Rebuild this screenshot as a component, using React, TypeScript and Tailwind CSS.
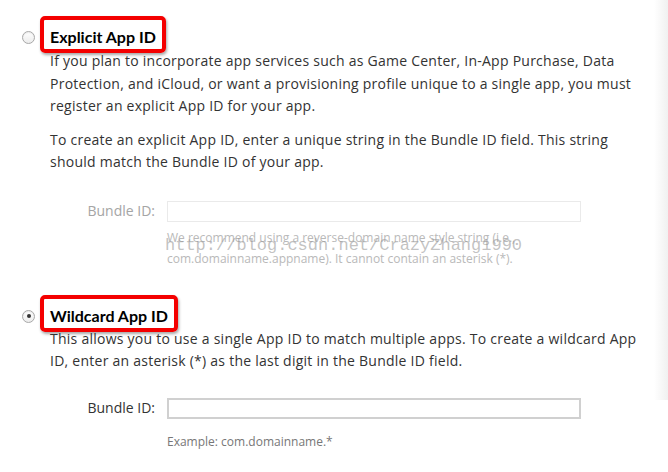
const body = "font-['Open_Sans','Lato',sans-serif]";

function Radio({ checked }: { checked?: boolean }) {
  return (
    <span className="mt-[15px] flex h-[13px] w-[13px] shrink-0 items-center justify-center rounded-full border border-[#a8a8a8] bg-gradient-to-b from-white to-[#ececec] shadow-[inset_0_1px_1px_rgba(0,0,0,0.08)]">
      {checked && <span className="h-[4px] w-[4px] rounded-full bg-[#333]" />}
    </span>
  );
}

function Heading({ children }: { children: React.ReactNode }) {
  return (
    <div className="inline-block rounded-[5px] border-[4px] border-[#f40000] pt-[6px] pr-[6px] pb-[1px] pl-[6px] shadow-[1px_2px_3px_rgba(0,0,0,0.35)]">
      <h2 className="font-['Lato',sans-serif] text-[16px] leading-[22px] font-bold text-black">
        {children}
      </h2>
    </div>
  );
}

function BundleRow({ disabled }: { disabled?: boolean }) {
  return (
    <div className="flex h-[21px] items-center">
      <label
        className={`w-[115px] text-right text-[14px] ${disabled ? "text-[#a5a5a5]" : "text-[#333]"}`}
      >
        Bundle ID:
      </label>
      <input
        disabled={disabled}
        className={`ml-[12px] h-[21px] w-[414px] bg-white outline-none ${
          disabled ? "border border-[#eaeaea]" : "border-2 border-[#d0d0d0]"
        }`}
      />
    </div>
  );
}

export default function App() {
  return (
    <div className={`relative h-[472px] w-[668px] overflow-hidden bg-white text-[#333] ${body}`}>
      <div className="pointer-events-none absolute top-0 right-0 h-[400px] w-[14px] bg-gradient-to-r from-white to-[#f0f0f0]" />

      <div className="flex gap-[5px] pt-[16px] pl-[22px]">
        <Radio />
        <div className="flex flex-col">
          <div className="-mb-[3px]">
            <Heading>Explicit App ID</Heading>
          </div>
          <div className="pl-[10px] text-[14px] leading-[22.5px] tracking-[0.25px]">
            <p className="w-[590px]">
              If you plan to incorporate app services such as Game Center, In-App Purchase, Data
              Protection, and iCloud, or want a provisioning profile unique to a single app, you must
              register an explicit App ID for your app.
            </p>
            <p className="mt-[11px] w-[590px]">
              To create an explicit App ID, enter a unique string in the Bundle ID field. This string
              should match the Bundle ID of your app.
            </p>
            <div className="mt-[27px] -ml-[10px] tracking-normal">
              <BundleRow disabled />
            </div>
            <div className="relative mt-[5px] ml-[117px] w-[390px] text-[12px] leading-[21px] tracking-normal text-[#b9b9b9]">
              <p>
                We recommend using a reverse-domain name style string (i.e.,
                com.domainname.appname). It cannot contain an asterisk (*).
              </p>
              <span className="absolute top-[9px] -left-[2px] font-['Liberation_Mono',monospace] text-[17px] leading-[20px] whitespace-nowrap text-[#9a9a9a]/60">
                http://blog.csdn.net/CrazyZhang1990
              </span>
            </div>
          </div>
        </div>
      </div>

      <div className="mt-[26px] flex gap-[5px] pl-[22px]">
        <Radio checked />
        <div className="flex flex-col">
          <div className="-mb-[4px]">
            <Heading>Wildcard App ID</Heading>
          </div>
          <div className="pl-[10px] text-[14px] leading-[22.5px] tracking-[0.25px]">
            <p className="w-[590px]">
              This allows you to use a single App ID to match multiple apps. To create a wildcard App
              ID, enter an asterisk (*) as the last digit in the Bundle ID field.
            </p>
            <div className="mt-[25px] -ml-[10px] tracking-normal">
              <BundleRow />
            </div>
            <p className="mt-[12px] ml-[117px] text-[12px] leading-[21px] tracking-normal text-[#777]">
              Example: com.domainname.*
            </p>
          </div>
        </div>
      </div>
    </div>
  );
}
